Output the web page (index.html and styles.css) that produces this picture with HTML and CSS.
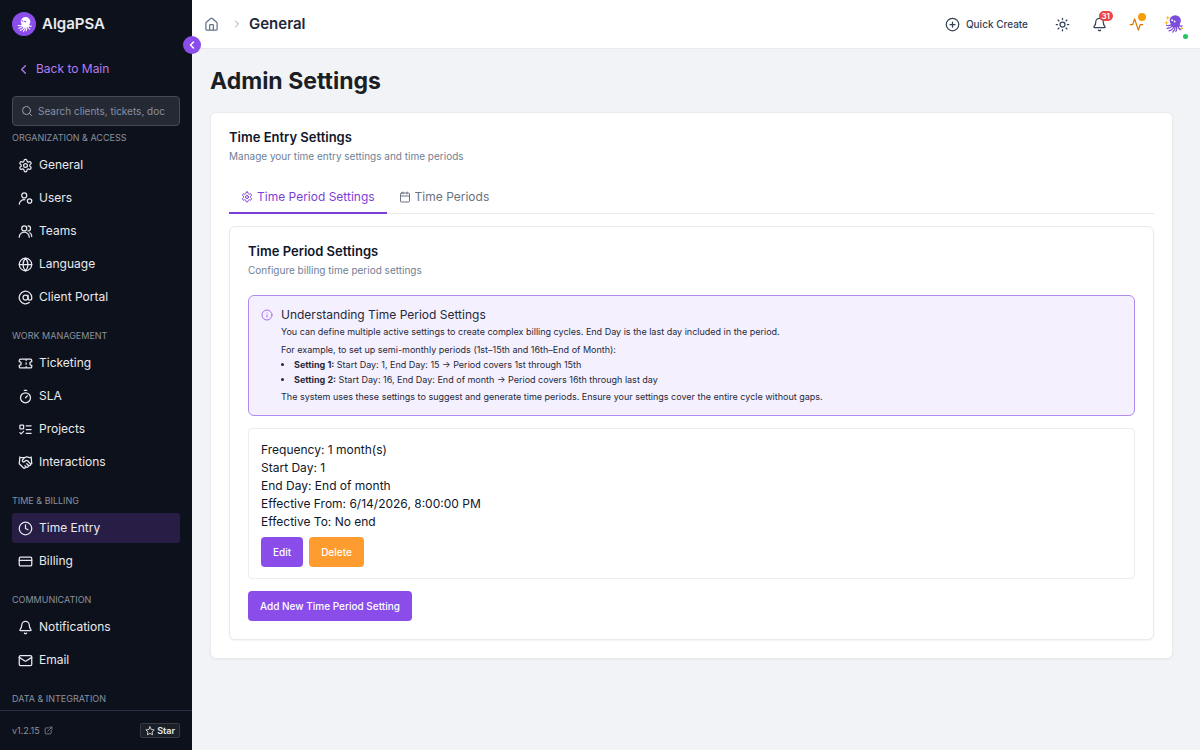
FILE: index.html
```html
<!DOCTYPE html>
<html lang="en">
<head>
    <meta charset="UTF-8">
    <meta name="viewport" content="width=device-width, initial-scale=1.0">
    <title>AlgaPSA - Admin Settings</title>
    <link rel="stylesheet" href="styles.css">
</head>
<body>
    <!-- shared shapes -->
    <svg class="defs" width="0" height="0" aria-hidden="true">
        <symbol id="i-settings" viewBox="0 0 24 24">
            <path d="M12.22 2h-.44a2 2 0 0 0-2 2v.18a2 2 0 0 1-1 1.73l-.43.25a2 2 0 0 1-2 0l-.15-.08a2 2 0 0 0-2.73.73l-.22.38a2 2 0 0 0 .73 2.73l.15.1a2 2 0 0 1 1 1.72v.51a2 2 0 0 1-1 1.74l-.15.09a2 2 0 0 0-.73 2.73l.22.38a2 2 0 0 0 2.73.73l.15-.08a2 2 0 0 1 2 0l.43.25a2 2 0 0 1 1 1.73V20a2 2 0 0 0 2 2h.44a2 2 0 0 0 2-2v-.18a2 2 0 0 1 1-1.73l.43-.25a2 2 0 0 1 2 0l.15.08a2 2 0 0 0 2.73-.73l.22-.39a2 2 0 0 0-.73-2.73l-.15-.08a2 2 0 0 1-1-1.74v-.5a2 2 0 0 1 1-1.74l.15-.09a2 2 0 0 0 .73-2.73l-.22-.38a2 2 0 0 0-2.73-.73l-.15.08a2 2 0 0 1-2 0l-.43-.25a2 2 0 0 1-1-1.73V4a2 2 0 0 0-2-2z"/>
            <circle cx="12" cy="12" r="3"/>
        </symbol>
        <symbol id="i-bell" viewBox="0 0 24 24">
            <path d="M10.3 21a2 2 0 0 0 3.4 0M3.26 15.33A1 1 0 0 0 4 17h16a1 1 0 0 0 .74-1.67C19.41 13.96 18 12.5 18 8A6 6 0 0 0 6 8c0 4.5-1.41 5.96-2.74 7.33"/>
        </symbol>
        <symbol id="i-left" viewBox="0 0 24 24">
            <path d="m15 18-6-6 6-6"/>
        </symbol>
        <symbol id="octopus" viewBox="0 0 32 32">
            <ellipse cx="18" cy="10.500" rx="9" ry="8.500" fill="currentColor"/>
            <path d="M12 14h13v5l-4 2h-6l-4-2z" fill="currentColor"/>
            <path d="M13 16c-2 2-5 3-9 2M14 18c-2 3-5 5-9 5M16 19c-1 4-4 7-8 8M18 19c0 4-1 7-4 10M20 19c1 4 0 7-1 9M22 18c1 4 2 6 4 7M23 16c1 3 3 4 6 3" fill="none" stroke="currentColor" stroke-width="2" stroke-linecap="round"/>
        </symbol>
    </svg>

    <aside class="sidebar">
        <div class="brand">
            <span class="brand-logo"><svg viewBox="0 0 32 32"><use href="#octopus"/><path d="M11 9l2 1M16 10l2 1" stroke="#8a4dea" stroke-width="2" stroke-linecap="round"/></svg></span>
            <span class="brand-name">AlgaPSA</span>
        </div>
        <button class="collapse" aria-label="Collapse sidebar"><svg class="icon"><use href="#i-left"/></svg></button>

        <a class="back" href="#"><svg class="icon"><use href="#i-left"/></svg>Back to Main</a>

        <label class="search">
            <svg class="icon" viewBox="0 0 24 24"><circle cx="11" cy="11" r="8"/><path d="m21 21-4.3-4.3"/></svg>
            <input type="text" placeholder="Search clients, tickets, doc" aria-label="Search">
        </label>

        <nav class="menu">
            <h2>Organization &amp; Access</h2>
            <a href="#"><svg class="icon"><use href="#i-settings"/></svg>General</a>
            <a href="#"><svg class="icon" viewBox="0 0 24 24"><circle cx="10" cy="7" r="4"/><path d="M2 21a8 8 0 0 1 9-7"/><circle cx="18.500" cy="16" r="3.500"/></svg>Users</a>
            <a href="#"><svg class="icon" viewBox="0 0 24 24"><circle cx="10" cy="7" r="4"/><path d="M2 21a8 8 0 0 1 16 0M16 3a4 4 0 0 1 0 8M19 14c2 1 3 4 3 6"/></svg>Teams</a>
            <a href="#"><svg class="icon" viewBox="0 0 24 24"><circle cx="12" cy="12" r="10"/><path d="M12 2a14.500 14.500 0 0 0 0 20 14.500 14.500 0 0 0 0-20M2 12h20"/></svg>Language</a>
            <a href="#"><svg class="icon" viewBox="0 0 24 24"><circle cx="12" cy="12" r="4"/><path d="M16 8v5a3 3 0 0 0 6 0v-1a10 10 0 1 0-4 8"/></svg>Client Portal</a>

            <h2>Work Management</h2>
            <a href="#"><svg class="icon" viewBox="0 0 24 24"><path d="M2 9a3 3 0 0 1 0 6v2a2 2 0 0 0 2 2h16a2 2 0 0 0 2-2v-2a3 3 0 0 1 0-6V7a2 2 0 0 0-2-2H4a2 2 0 0 0-2 2ZM13 5v2M13 17v2M13 11v2"/></svg>Ticketing</a>
            <a href="#"><svg class="icon" viewBox="0 0 24 24"><path d="M10 2h4M12 14l3-3"/><circle cx="12" cy="14" r="8"/></svg>SLA</a>
            <a href="#"><svg class="icon" viewBox="0 0 24 24"><rect x="3" y="5" width="6" height="6" rx="1"/><path d="m3 17 2 2 4-4M13 6h8M13 12h8M13 18h8"/></svg>Projects</a>
            <a href="#"><svg class="icon" viewBox="0 0 24 24"><path d="m11 17 2 2a1 1 0 1 0 3-3M14 14l2.500 2.500a1 1 0 1 0 3-3l-3.880-3.880a3 3 0 0 0-4.240 0l-.88.88a1 1 0 1 1-3-3l2.810-2.810a5.790 5.790 0 0 1 7.060-.87l.47.280a2 2 0 0 0 1.420.250L21 4M21 3l1 11h-2M3 3 2 14l6.500 6.500a1 1 0 1 0 3-3M3 4h8"/></svg>Interactions</a>

            <h2>Time &amp; Billing</h2>
            <a href="#" class="active"><svg class="icon" viewBox="0 0 24 24"><circle cx="12" cy="12" r="10"/><path d="M12 6v6l4 2"/></svg>Time Entry</a>
            <a href="#"><svg class="icon" viewBox="0 0 24 24"><rect x="2" y="5" width="20" height="14" rx="2"/><path d="M2 10h20"/></svg>Billing</a>

            <h2>Communication</h2>
            <a href="#"><svg class="icon"><use href="#i-bell"/></svg>Notifications</a>
            <a href="#"><svg class="icon" viewBox="0 0 24 24"><rect x="2" y="4" width="20" height="16" rx="2"/><path d="m22 7-8.970 5.700a1.940 1.940 0 0 1-2.060 0L2 7"/></svg>Email</a>

            <h2>Data &amp; Integration</h2>
        </nav>

        <footer class="sidebar-footer">
            <a class="version" href="#">v1.2.15
                <svg class="icon" viewBox="0 0 24 24"><path d="M12 5H5a2 2 0 0 0-2 2v12a2 2 0 0 0 2 2h12a2 2 0 0 0 2-2v-7M15 3h6v6M10 14 21 3"/></svg>
            </a>
            <a class="star" href="#">
                <svg class="icon" viewBox="0 0 24 24"><path d="m12 2 3.100 6.300 6.900 1-5 4.900 1.200 6.900L12 17.800l-6.200 3.300L7 14.200 2 9.300l6.900-1z"/></svg>
                Star
            </a>
        </footer>
    </aside>

    <div class="page">
        <header class="topbar">
            <nav class="crumbs">
                <a href="#" aria-label="Home"><svg class="icon" viewBox="0 0 24 24"><path d="M15 21v-8a1 1 0 0 0-1-1h-4a1 1 0 0 0-1 1v8M3 10a2 2 0 0 1 .7-1.500l7-6a2 2 0 0 1 2.600 0l7 6A2 2 0 0 1 21 10v9a2 2 0 0 1-2 2H5a2 2 0 0 1-2-2z"/></svg></a>
                <svg class="icon chevron" viewBox="0 0 24 24"><path d="m9 18 6-6-6-6"/></svg>
                <span class="current">General</span>
            </nav>
            <div class="actions">
                <button class="quick"><svg class="icon" viewBox="0 0 24 24"><circle cx="12" cy="12" r="10"/><path d="M8 12h8M12 8v8"/></svg>Quick Create</button>
                <button class="tool" aria-label="Theme"><svg class="icon" viewBox="0 0 24 24"><circle cx="12" cy="12" r="4"/><path d="M12 2v2M12 20v2M4.900 4.900l1.400 1.400M17.700 17.700l1.400 1.400M2 12h2M20 12h2M6.300 17.700l-1.400 1.400M19.100 4.900l-1.400 1.400"/></svg></button>
                <button class="tool" aria-label="Notifications"><svg class="icon"><use href="#i-bell"/></svg><span class="count">31</span></button>
                <button class="tool activity" aria-label="Activity"><svg class="icon" viewBox="0 0 24 24"><path d="M22 12h-4l-3 9L9 3l-3 9H2"/></svg><span class="dot"></span></button>
                <button class="tool avatar" aria-label="Account">
                    <svg viewBox="0 0 32 32">
                        <path d="M6 2l1 3 3 1-3 1-1 3-1-3-3-1 3-1zM4 10l1 3 3 1-3 1-1 3-1-3-3-1 3-1zM28 19l1 3 3 1-3 1-1 3-1-3-3-1 3-1z" fill="#fbbf24"/>
                        <use href="#octopus"/>
                        <circle cx="13" cy="10" r="1.500" fill="#fff"/><circle cx="17" cy="12" r="1.500" fill="#fff"/>
                    </svg>
                    <span class="online"></span>
                </button>
            </div>
        </header>

        <main class="content">
            <h1>Admin Settings</h1>

            <section class="card">
                <h2>Time Entry Settings</h2>
                <p class="description">Manage your time entry settings and time periods</p>

                <div class="tabs" role="tablist">
                    <button class="tab selected" role="tab" aria-selected="true"><svg class="icon"><use href="#i-settings"/></svg>Time Period Settings</button>
                    <button class="tab" role="tab" aria-selected="false"><svg class="icon" viewBox="0 0 24 24"><rect x="3" y="4" width="18" height="18" rx="2"/><path d="M8 2v4M16 2v4M3 10h18"/></svg>Time Periods</button>
                </div>

                <section class="card inner">
                    <h2>Time Period Settings</h2>
                    <p class="description">Configure billing time period settings</p>

                    <div class="notice">
                        <svg class="icon" viewBox="0 0 24 24"><circle cx="12" cy="12" r="10"/><path d="M12 16v-4M12 8h.01"/></svg>
                        <div class="notice-text">
                            <h3>Understanding Time Period Settings</h3>
                            <p>You can define multiple active settings to create complex billing cycles. End Day is the last day included in the period.</p>
                            <p class="example">For example, to set up semi-monthly periods (1st–15th and 16th–End of Month):</p>
                            <ul>
                                <li><strong>Setting 1:</strong> Start Day: 1, End Day: 15 → Period covers 1st through 15th</li>
                                <li><strong>Setting 2:</strong> Start Day: 16, End Day: End of month → Period covers 16th through last day</li>
                            </ul>
                            <p>The system uses these settings to suggest and generate time periods. Ensure your settings cover the entire cycle without gaps.</p>
                        </div>
                    </div>

                    <div class="setting">
                        <p>Frequency: 1 month(s)</p>
                        <p>Start Day: 1</p>
                        <p>End Day: End of month</p>
                        <p>Effective From: 6/14/2026, 8:00:00 PM</p>
                        <p>Effective To: No end</p>
                        <div class="setting-actions">
                            <button class="btn">Edit</button>
                            <button class="btn orange">Delete</button>
                        </div>
                    </div>

                    <button class="btn">Add New Time Period Setting</button>
                </section>
            </section>
        </main>
    </div>
</body>
</html>
```

FILE: styles.css
```css
* {
    box-sizing: border-box;
}

body {
    margin: 0;
    height: 100vh;
    display: flex;
    font-family: Inter, "Open Sans", sans-serif;
    font-size: 12px;
    line-height: 18px;
    color: #0f172a;
    background: #f2f3f6;
}

h1, h2, h3, p, ul {
    margin: 0;
}

a {
    color: inherit;
    text-decoration: none;
}

button {
    font: inherit;
    color: inherit;
    background: none;
    border: none;
    padding: 0;
    cursor: pointer;
}

.defs {
    position: absolute;
}

.icon {
    width: 15px;
    height: 15px;
    flex-shrink: 0;
    fill: none;
    stroke: currentColor;
    stroke-width: 2;
    stroke-linecap: round;
    stroke-linejoin: round;
}

/* sidebar */
.sidebar {
    position: relative;
    width: 192px;
    flex-shrink: 0;
    display: flex;
    flex-direction: column;
    background: #0d111c;
    color: #e8eaed;
}

.brand {
    height: 48px;
    padding: 0 12px;
    display: flex;
    align-items: center;
    gap: 6px;
    flex-shrink: 0;
}

.brand-logo {
    width: 24px;
    height: 24px;
    border-radius: 50%;
    display: flex;
    align-items: center;
    justify-content: center;
    background: #8a4dea;
    color: #fff;
}

.brand-logo svg {
    width: 17px;
    height: 17px;
}

.brand-name {
    font-size: 15px;
    font-weight: 600;
}

.collapse {
    position: absolute;
    top: 36px;
    right: -9px;
    width: 18px;
    height: 18px;
    border-radius: 50%;
    display: flex;
    align-items: center;
    justify-content: center;
    background: #8a4dea;
    color: #fff;
}

.collapse .icon {
    width: 12px;
    height: 12px;
    stroke-width: 3;
}

.back {
    margin: 6px 12px 12px;
    height: 30px;
    padding: 0 4px;
    display: flex;
    align-items: center;
    gap: 5px;
    color: #b37cf0;
}

.search {
    margin: 0 12px;
    height: 30px;
    padding: 0 8px;
    display: flex;
    align-items: center;
    gap: 5px;
    border: 1px solid #454a56;
    border-radius: 4px;
    background: #252934;
    color: #9ca3af;
}

.search .icon {
    width: 12px;
    height: 12px;
}

.search input {
    width: 100%;
    min-width: 0;
    padding: 0;
    border: none;
    outline: none;
    background: none;
    font: inherit;
    font-size: 10px;
    color: #e8eaed;
}

.search input::placeholder {
    color: #8791a3;
}

.menu {
    flex: 1;
    min-height: 0;
    margin-top: 3px;
    padding: 0 12px;
    overflow: hidden;
    display: flex;
    flex-direction: column;
    gap: 3px;
}

.menu h2 {
    margin-top: 12px;
    font-size: 9px;
    line-height: 18px;
    font-weight: 400;
    text-transform: uppercase;
    color: #8b919d;
}

.menu h2:first-child {
    margin-top: 0;
}

.menu a {
    height: 30px;
    flex-shrink: 0;
    padding: 0 6px;
    display: flex;
    align-items: center;
    gap: 6px;
    border-radius: 3px;
}

.menu a.active {
    background: #271d45;
}

.sidebar-footer {
    height: 40px;
    padding: 0 12px;
    display: flex;
    align-items: center;
    justify-content: space-between;
    border-top: 1px solid #283244;
    font-size: 9px;
}

.version {
    display: flex;
    align-items: center;
    gap: 4px;
    color: #8b919d;
}

.version .icon {
    width: 9px;
    height: 9px;
}

.star {
    height: 15px;
    padding: 0 4px;
    display: flex;
    align-items: center;
    gap: 2px;
    border: 1px solid #353b44;
    border-radius: 2px;
    background: #1b2028;
    font-weight: 600;
}

.star .icon {
    width: 10px;
    height: 10px;
}

/* top bar */
.page {
    flex: 1;
    min-width: 0;
    display: flex;
    flex-direction: column;
}

.topbar {
    height: 49px;
    flex-shrink: 0;
    padding: 0 14px 0 12px;
    display: flex;
    align-items: center;
    justify-content: space-between;
    background: #fff;
    border-bottom: 1px solid #e8eaf3;
}

.crumbs {
    display: flex;
    align-items: center;
    gap: 12px;
}

.crumbs a {
    display: flex;
    color: #64748b;
}

.crumbs .chevron {
    width: 12px;
    height: 12px;
    margin-right: -6px;
    color: #94a3b8;
}

.current {
    font-size: 15px;
    font-weight: 600;
    color: #1e293b;
}

.actions {
    display: flex;
    align-items: center;
    gap: 12px;
    color: #334155;
}

.quick {
    display: flex;
    align-items: center;
    gap: 6px;
    margin-right: 10px;
    font-size: 10px;
    font-weight: 500;
}

.tool {
    position: relative;
    width: 25px;
    height: 24px;
    display: flex;
    align-items: center;
    justify-content: center;
}

.activity {
    color: #d97706;
}

.count {
    position: absolute;
    top: -1px;
    right: -1px;
    padding: 0 3px;
    border-radius: 6px;
    background: #ef4444;
    color: #fff;
    font-size: 8px;
    line-height: 10px;
    font-weight: 600;
}

.dot {
    position: absolute;
    top: 1px;
    right: 3px;
    width: 8px;
    height: 8px;
    border-radius: 50%;
    background: #f59e0b;
}

.avatar {
    color: #7c4ddb;
}

.avatar svg {
    width: 20px;
    height: 20px;
}

.online {
    position: absolute;
    right: -2px;
    bottom: -3px;
    width: 5px;
    height: 5px;
    border-radius: 50%;
    background: #22c55e;
}

/* content */
.content {
    padding: 14px 27px 18px 18px;
}

h1 {
    margin-bottom: 13px;
    font-size: 23px;
    line-height: 36px;
    font-weight: 700;
    color: #1b1e24;
}

.card {
    padding: 15px 18px 18px;
    border: 1px solid #e8eaee;
    border-radius: 6px;
    background: #fff;
    box-shadow: 0 1px 2px rgba(0, 0, 0, 0.05);
}

.card h2 {
    font-size: 13px;
    line-height: 18px;
    font-weight: 600;
}

.description {
    margin-top: 2px;
    font-size: 10px;
    line-height: 16px;
    color: #708096;
}

.tabs {
    margin: 18px 0 12px;
    display: flex;
    border-bottom: 1px solid #e8eaee;
}

.tab {
    height: 32px;
    margin-bottom: -1px;
    padding: 0 12px;
    display: flex;
    align-items: center;
    gap: 4px;
    border-bottom: 2px solid transparent;
    color: #6b7280;
}

.tab.selected {
    color: #7c3fd6;
    border-color: #7c3fd6;
}

.tab .icon {
    width: 12px;
    height: 12px;
}

.notice {
    margin: 17px 0 12px;
    padding: 10px 12px 11px;
    display: flex;
    gap: 8px;
    border: 1px solid #b18af0;
    border-radius: 6px;
    background: #f5f0fe;
}

.notice .icon {
    width: 12px;
    height: 12px;
    margin-top: 3px;
    color: #a56ef5;
}

.notice-text {
    font-size: 9px;
    line-height: 15px;
    color: #1e293b;
}

.notice h3 {
    font-size: 12px;
    line-height: 18px;
    font-weight: 400;
}

.notice .example {
    margin-top: 3px;
}

.notice ul {
    margin-bottom: 2px;
    padding-left: 13px;
}

.setting {
    margin-bottom: 12px;
    padding: 12px 12px 11px;
    border: 1px solid #ebedf0;
    border-radius: 4px;
}

.setting-actions {
    margin-top: 6px;
    display: flex;
    gap: 6px;
}

.btn {
    height: 30px;
    padding: 0 12px;
    border-radius: 4px;
    background: #8a4dea;
    color: #fff;
    font-size: 10px;
    font-weight: 500;
}

.btn.orange {
    background: #ff9c30;
}
```
